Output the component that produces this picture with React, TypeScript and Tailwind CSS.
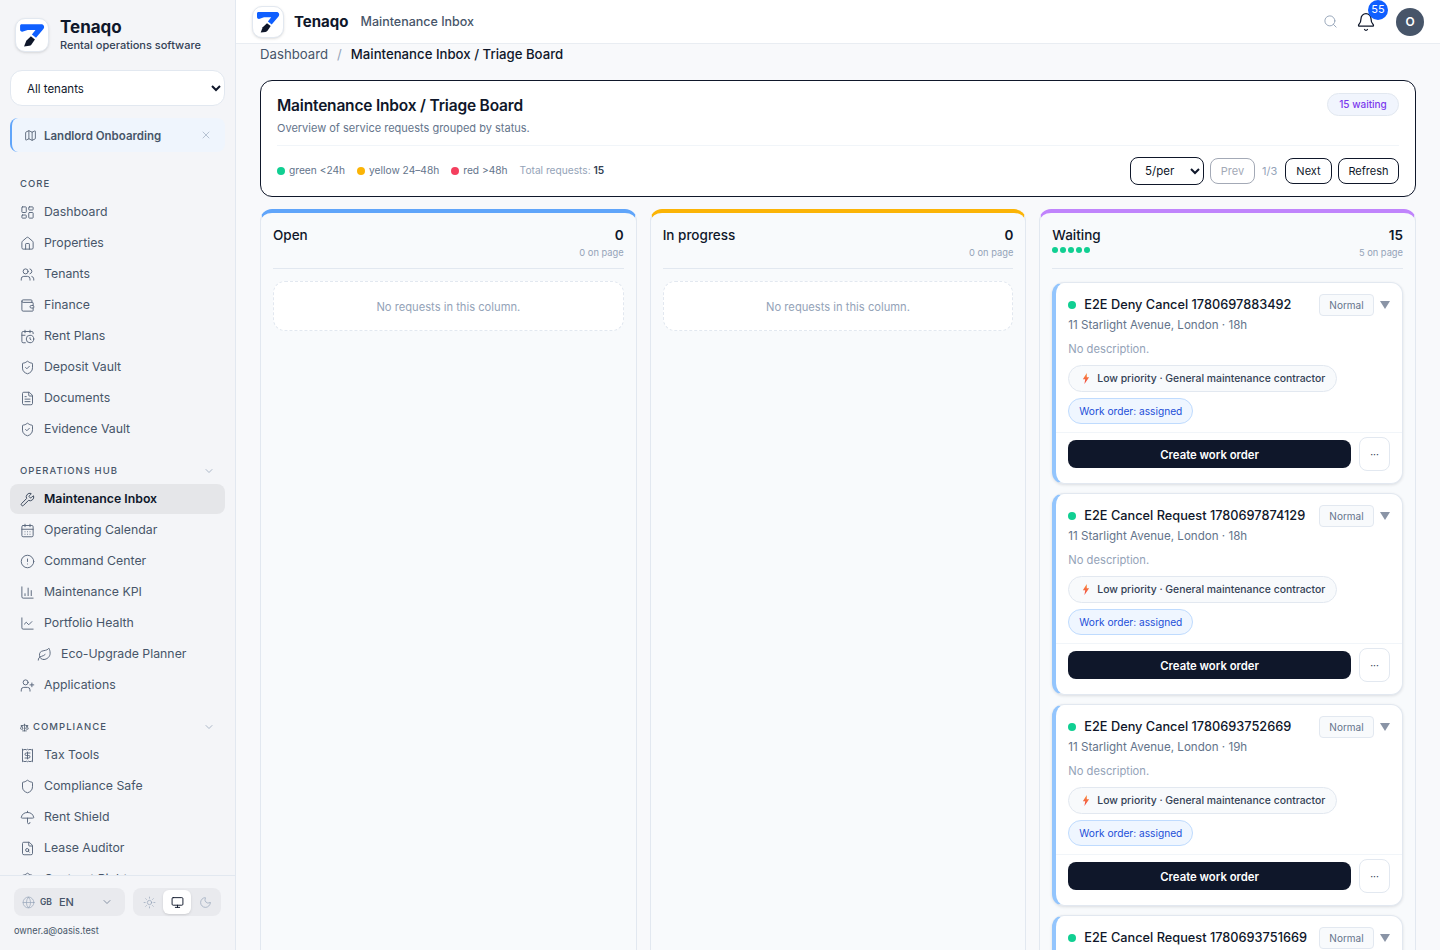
import React from 'react';
import {
  Map, X, LayoutDashboard, Home, Users, Wallet, CalendarClock, ShieldCheck, FileText, Wrench, CalendarDays, CircleAlert,
  ChartColumn, ChartLine, Leaf, UserPlus, ChevronDown, Scale, Receipt, Shield, Umbrella, FileSearch,
  Globe, Sun, Monitor, Moon, Search, Bell,
} from 'lucide-react';

const Logo = ({ size }: { size: number }) => (
  <svg viewBox="0 0 24 24" width={size} height={size} fill="none">
    <path d="M2.500 2H20.500c2.500 0 3.500 2.600 2 4.400L15.700 14.500l-3.800-2.900 3.300-4.300H8L3 9C1.800 9 1 8.200 1 7V3.500C1 2.600 1.600 2 2.500 2z" fill="#0f5fff" />
    <path d="M11 13.200l3.700 2.900-3.200 4.700c-.5.7-1.200 1.100-2 1.200l-4.800.6 2-5.400z" fill="#0f172a" />
  </svg>
);

const NavItem = ({ icon: Icon, label, active, indent }: { icon: React.ElementType; label: string; active?: boolean; indent?: boolean }) => (
  <div
    className={`flex h-[30px] mb-px shrink-0 items-center gap-[9px] rounded-lg text-[12.3px] ${indent ? 'pl-[27px]' : 'pl-[10px]'} ${
      active ? 'bg-[#e5e6e9] font-semibold text-[#0f172a]' : 'text-[#475569]'
    }`}
  >
    <Icon size={15} strokeWidth={1.5} className={active ? 'text-[#334155]' : 'text-[#56647a]'} />
    <span>{label}</span>
  </div>
);

const SectionLabel = ({ label, chevron, icon }: { label: string; chevron?: boolean; icon?: boolean }) => (
  <div className="flex h-[14px] shrink-0 items-center justify-between pl-[10px] pr-[10px] text-[9.5px] font-medium uppercase tracking-[0.11em] text-[#475569]">
    <span className="flex items-center gap-[4px]">
      {icon && <Scale size={9} strokeWidth={2} />}
      {label}
    </span>
    {chevron && <ChevronDown size={12} strokeWidth={1.5} className="text-[#94a3b8]" />}
  </div>
);

const Sidebar = () => (
  <aside className="flex h-full w-[236px] shrink-0 flex-col border-r border-[#e2e8f0] bg-[#f4f5f8]">
    <div className="flex items-center gap-[11px] pl-[15px] pt-[17px]">
      <div className="flex size-[34px] items-center justify-center rounded-[10px] border border-[#e2e8f0] bg-white shadow-sm">
        <Logo size={26} />
      </div>
      <div>
        <div className="text-[17px] leading-[20px] font-bold text-[#0f172a]">Tenaqo</div>
        <div className="mt-px text-[11px] leading-[14px] font-medium text-[#334155]">Rental operations software</div>
      </div>
    </div>
    <div className="px-[10px] pt-[18px]">
      <select className="h-9 w-full rounded-xl border border-[#e2e8f0] bg-white pl-3 pt-px text-[11.5px] text-[#0f172a]">
        <option>All tenants</option>
      </select>
    </div>
    <div className="mx-[10px] mt-3 flex h-[34px] items-center rounded-lg border-l-2 border-[#60a5fa] bg-[#eff5fd] pl-3 pr-[13px]">
      <Map size={13} strokeWidth={1.5} className="text-[#475569]" />
      <span className="ml-[7px] flex-1 pt-[3px] text-[11.5px] font-semibold text-[#475569]">Landlord Onboarding</span>
      <X size={12} strokeWidth={1.25} className="text-[#94a3b8]" />
    </div>
    <div className="flex min-h-0 flex-1 flex-col overflow-hidden px-[10px] pt-[25px]">
      <SectionLabel label="Core" />
      <div className="mt-[6px] flex flex-col">
        <NavItem icon={LayoutDashboard} label="Dashboard" />
        <NavItem icon={Home} label="Properties" />
        <NavItem icon={Users} label="Tenants" />
        <NavItem icon={Wallet} label="Finance" />
        <NavItem icon={CalendarClock} label="Rent Plans" />
        <NavItem icon={ShieldCheck} label="Deposit Vault" />
        <NavItem icon={FileText} label="Documents" />
        <NavItem icon={ShieldCheck} label="Evidence Vault" />
      </div>
      <div className="mt-[19px]"><SectionLabel label="Operations Hub" chevron /></div>
      <div className="mt-[6px] flex flex-col">
        <NavItem icon={Wrench} label="Maintenance Inbox" active />
        <NavItem icon={CalendarDays} label="Operating Calendar" />
        <NavItem icon={CircleAlert} label="Command Center" />
        <NavItem icon={ChartColumn} label="Maintenance KPI" />
        <NavItem icon={ChartLine} label="Portfolio Health" />
        <NavItem icon={Leaf} label="Eco-Upgrade Planner" indent />
        <NavItem icon={UserPlus} label="Applications" />
      </div>
      <div className="mt-[19px]"><SectionLabel label="Compliance" chevron icon /></div>
      <div className="mt-[6px] flex flex-col">
        <NavItem icon={Receipt} label="Tax Tools" />
        <NavItem icon={Shield} label="Compliance Safe" />
        <NavItem icon={Umbrella} label="Rent Shield" />
        <NavItem icon={FileSearch} label="Lease Auditor" />
        <NavItem icon={ShieldCheck} label="Contract Rights" />
      </div>
    </div>
    <div className="h-[75px] shrink-0 border-t border-[#e2e8f0] px-[14px] pt-3">
      <div className="flex gap-2">
        <div className="flex h-7 w-[111px] items-center rounded-lg bg-[#e9eaee] pl-2 pr-3 text-[#475569]">
          <Globe size={13} strokeWidth={1.25} className="text-[#94a3b8]" />
          <span className="ml-[5px] text-[8.500px] font-semibold">GB</span>
          <span className="ml-[7px] flex-1 text-[11px] font-medium">EN</span>
          <ChevronDown size={12} strokeWidth={1.5} className="text-[#64748b]" />
        </div>
        <div className="flex h-7 w-[88px] items-center justify-between rounded-lg bg-[#e9eaee] p-[2px]">
          <div className="flex h-6 w-7 items-center justify-center"><Sun size={13} strokeWidth={1.25} className="text-[#94a3b8]" /></div>
          <div className="flex h-6 w-7 items-center justify-center rounded-md bg-white shadow-sm"><Monitor size={13} strokeWidth={1.75} className="text-[#0f172a]" /></div>
          <div className="flex h-6 w-7 items-center justify-center"><Moon size={13} strokeWidth={1.25} className="text-[#94a3b8]" /></div>
        </div>
      </div>
      <div className="mt-[9px] text-[9.2px] leading-3 text-[#475569]">owner.a@oasis.test</div>
    </div>
  </aside>
);

const Header = () => (
  <header className="flex h-[44px] shrink-0 items-center border-b border-[#e9edf2] bg-white pl-4 pr-4">
    <div className="flex size-8 items-center justify-center rounded-[10px] border border-[#e2e8f0] bg-white shadow-sm">
      <Logo size={24} />
    </div>
    <span className="ml-[10px] pt-px text-[15px] font-bold text-[#0f172a]">Tenaqo</span>
    <span className="ml-3 pt-[2px] text-[12.5px] font-medium text-[#475569]">Maintenance Inbox</span>
    <div className="ml-auto flex items-center">
      <Search size={15} strokeWidth={1.5} className="text-[#94a3b8]" />
      <div className="relative ml-[18px] mr-[20px]">
        <Bell size={20} strokeWidth={1.5} className="text-[#0f172a]" />
        <span className="absolute -right-[12px] -top-[12px] flex h-5 w-5 items-center justify-center rounded-full bg-[#0f5fff] text-[11px] text-white">55</span>
      </div>
      <div className="flex size-7 items-center justify-center rounded-full bg-[#475569] text-xs font-semibold text-white">O</div>
    </div>
  </header>
);

const Legend = ({ color, label }: { color: string; label: string }) => (
  <span className="flex items-center gap-[4px] text-[10.2px] text-[#64748b]">
    <span className={`size-2 rounded-full ${color}`} />
    {label}
  </span>
);

const OutlineBtn = ({ label, width, disabled }: { label: string; width: string; disabled?: boolean }) => (
  <button className={`h-[26px] rounded-lg border bg-white text-[11px] ${width} ${disabled ? 'border-[#a3a9b6] text-[#a3a9b6]' : 'border-[#0f172a] text-[#0f172a]'}`}>
    {label}
  </button>
);

const TitleCard = () => (
  <section className="mt-4 rounded-xl border border-[#0f172a] bg-white px-4 pt-[13px]">
    <div className="flex items-start justify-between">
      <div>
        <h1 className="text-[15.5px] leading-6 font-semibold tracking-[-0.012em] text-[#0f172a]">Maintenance Inbox / Triage Board</h1>
        <p className="mt-[2px] text-[11px] leading-4 text-[#64748b]">Overview of service requests grouped by status.</p>
      </div>
      <span className="-mt-px flex h-[23px] w-[72px] items-center justify-center rounded-full border border-[#e2e8f0] bg-[#f1f5fd] text-[10px] font-medium text-[#7c3aed]">15 waiting</span>
    </div>
    <div className="mt-[9px] flex h-[51px] items-center border-t border-[#f1f5f9]">
      <div className="flex items-center gap-3">
        <Legend color="bg-[#10cf92]" label="green <24h" />
        <Legend color="bg-[#fbb406]" label="yellow 24–48h" />
        <Legend color="bg-[#f43f5e]" label="red >48h" />
        <span className="text-[10.2px] text-[#94a3b8]">Total requests: <b className="font-semibold text-[#334155]">15</b></span>
      </div>
      <div className="ml-auto flex items-center gap-[6px]">
        <select className="h-7 w-[74px] rounded-lg border border-[#0f172a] bg-white pl-[10px] text-[11.5px] text-[#0f172a]">
          <option>5/per</option>
        </select>
        <OutlineBtn label="Prev" width="w-[45px]" disabled />
        <span className="ml-px w-[17px] text-[11px] text-[#94a3b8]">1/3</span>
        <OutlineBtn label="Next" width="w-[47px]" />
        <OutlineBtn label="Refresh" width="w-[61px]" />
      </div>
    </div>
  </section>
);

const RequestCard = ({ id, title, age }: { id: string; title: string; age: string }) => (
  <div className="shrink-0 rounded-xl border border-l-4 border-[#e2e8f0] border-l-[#93c5fd] bg-white pt-[11px] shadow-[0_1px_3px_rgba(15,23,42,0.12)]">
    <div className="flex items-center pl-3 pr-3">
      <span className="size-2 rounded-full bg-[#10cf92]" />
      <span className="ml-2 flex-1 text-[12.75px] font-medium text-[#0f172a]">{title}</span>
      <span className="flex h-[22px] w-[55px] items-center justify-center rounded border border-[#e2e8f0] bg-[#f8fafc] text-[10px] text-[#64748b]">Normal</span>
      <svg viewBox="0 0 10 10" className="ml-[6px] size-[10px]"><path d="M0 1h10L5 9z" fill="#8a94a6" /></svg>
    </div>
    <div className="pl-3 pt-px text-[11.6px] leading-4 text-[#64748b]">11 Starlight Avenue, London · {age}</div>
    <div className="pl-3 pt-2 text-[11.2px] leading-4 text-[#94a3b8]">No description.</div>
    <div className="flex pl-3 pt-2">
      <span className="flex h-[27px] w-[269px] items-center rounded-full border border-[#e2e8f0] bg-[#f8fafc] pl-[13px] text-[10.4px] font-medium text-[#334155]">
        <svg viewBox="0 0 10 14" className="h-[11px] w-2">
          <defs>
            <linearGradient id={id} x1="0" y1="0" x2="0" y2="1">
              <stop offset="0" stopColor="#fb923c" />
              <stop offset="1" stopColor="#ef4444" />
            </linearGradient>
          </defs>
          <path d="M6 0L1 8h3l-1 6 6-8.500H6z" fill={`url(#${id})`} />
        </svg>
        <span className="ml-[7px]">Low priority · General maintenance contractor</span>
      </span>
    </div>
    <div className="flex pl-3 pt-[6px]">
      <span className="flex h-[26px] w-[125px] items-center justify-center rounded-full border border-[#bfdbfe] bg-[#eff6ff] pt-px text-[10.2px] text-[#1d4ed8]">Work order: assigned</span>
    </div>
    <div className="mt-2 flex items-center gap-2 border-t border-[#f1f5f9] pl-3 pr-3 pt-[4px] pb-[12px]">
      <button className="h-7 flex-1 rounded-lg bg-[#0f172a] pt-[2px] text-[11.3px] font-semibold text-white">Create work order</button>
      <button className="h-[34px] w-[31px] rounded-lg border border-[#e2e8f0] bg-white text-[10px] text-[#334155]">···</button>
    </div>
  </div>
);

const Column = ({ title, count, onPage, barColor, dots, children }: { title: string; count: number; onPage: number; barColor: string; dots?: boolean; children: React.ReactNode }) => (
  <div className={`flex h-[760px] min-w-0 flex-col overflow-hidden rounded-xl border border-t-4 border-[#e2e8f0] bg-[#f8fafc] px-3 ${barColor}`}>
    <div className="flex h-[56px] shrink-0 justify-between border-b border-[#e2e8f0] pt-[12px]">
      <div>
        <div className="text-[13.5px] leading-[20px] font-medium text-[#0f172a]">{title}</div>
        {dots && (
          <div className="mt-[2px] flex gap-[2px]">
            {[0, 1, 2, 3, 4].map((i) => <span key={i} className="size-[6px] rounded-full bg-[#10cf92]" />)}
          </div>
        )}
      </div>
      <div className="text-right">
        <div className="text-[13.5px] leading-[20px] font-semibold text-[#0f172a]">{count}</div>
        <div className="text-[9.3px] leading-3 mt-[2px] text-[#94a3b8]">{onPage} on page</div>
      </div>
    </div>
    <div className={`flex flex-col gap-[9px] ${dots ? 'pt-[13px]' : 'pt-[12px]'}`}>{children}</div>
  </div>
);

const EmptyColumn = () => (
  <div className="flex h-[50px] items-center justify-center rounded-xl border border-dashed border-[#e2e8f0] bg-white pt-[3px] text-[11.2px] text-[#94a3b8]">
    No requests in this column.
  </div>
);

export default function App() {
  return (
    <div className="flex h-[950px] overflow-hidden bg-[#f8f9fb] text-[#0f172a]" style={{ fontFamily: 'Inter, "Noto Sans", sans-serif' }}>
      <Sidebar />
      <main className="flex min-w-0 flex-1 flex-col overflow-hidden">
        <Header />
        <div className="px-6">
          <div className="mt-[2px] flex h-[18px] items-center text-[13.2px] text-[#475569]">
            Dashboard <span className="mx-[9px] text-[#94a3b8]">/</span>
            <span className="font-medium text-[#0f172a]">Maintenance Inbox / Triage Board</span>
          </div>
          <TitleCard />
          <div className="mt-3 grid grid-cols-3 gap-[13px]">
            <Column title="Open" count={0} onPage={0} barColor="border-t-[#60a5fa]"><EmptyColumn /></Column>
            <Column title="In progress" count={0} onPage={0} barColor="border-t-[#fbb406]"><EmptyColumn /></Column>
            <Column title="Waiting" count={15} onPage={5} barColor="border-t-[#c084fc]" dots>
              <RequestCard id="bolt-1" title="E2E Deny Cancel 1780697883492" age="18h" />
              <RequestCard id="bolt-2" title="E2E Cancel Request 1780697874129" age="18h" />
              <RequestCard id="bolt-3" title="E2E Deny Cancel 1780693752669" age="19h" />
              <RequestCard id="bolt-4" title="E2E Cancel Request 1780693751669" age="19h" />
            </Column>
          </div>
        </div>
      </main>
    </div>
  );
}
